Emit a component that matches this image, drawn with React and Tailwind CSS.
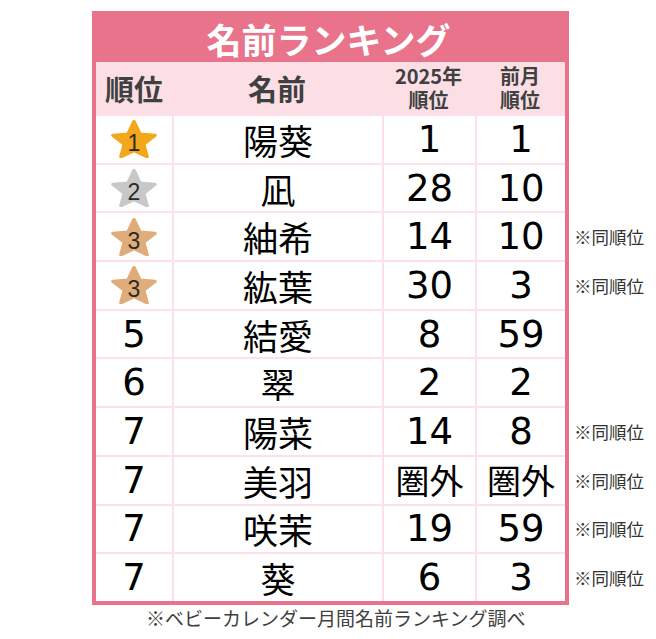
import React from "react";

const FONT = { fontFamily: '"DejaVu Sans", "Noto Sans CJK JP", sans-serif' };
const JP = { fontFamily: '"Noto Sans CJK JP", sans-serif' };

function Star({ color, n }) {
  return (
    <div className="relative w-[46px] h-[38px] flex items-center justify-center">
      <svg className="absolute inset-0" width="46" height="38" viewBox="0 0 100 92" preserveAspectRatio="none">
        <polygon
          points="50,4 62.93,34.2 95.65,37.17 70.92,58.8 78.21,88.83 50,74 21.79,88.83 29.08,58.8 4.35,37.17 37.07,34.2"
          fill={color}
          stroke={color}
          strokeWidth="8"
          strokeLinejoin="round"
        />
      </svg>
      <span className="relative text-[23px] leading-none text-[#2a2a2a] mt-[9px]" style={{ fontFamily: '"Liberation Sans", sans-serif' }}>
        {n}
      </span>
    </div>
  );
}

const rows = [
  { rank: <Star color="#f3a81c" n="1" />, name: "陽葵", y: "1", p: "1", note: false },
  { rank: <Star color="#c8c8c8" n="2" />, name: "凪", y: "28", p: "10", note: false },
  { rank: <Star color="#e0ad7a" n="3" />, name: "紬希", y: "14", p: "10", note: true },
  { rank: <Star color="#e0ad7a" n="3" />, name: "紘葉", y: "30", p: "3", note: true },
  { rank: "5", name: "結愛", y: "8", p: "59", note: false },
  { rank: "6", name: "翠", y: "2", p: "2", note: false },
  { rank: "7", name: "陽菜", y: "14", p: "8", note: true },
  { rank: "7", name: "美羽", y: "圏外", p: "圏外", note: true },
  { rank: "7", name: "咲茉", y: "19", p: "59", note: true },
  { rank: "7", name: "葵", y: "6", p: "3", note: true },
];

function Val({ v }) {
  if (v === "圏外") {
    return <span className="text-[34px] leading-none" style={JP}>{v}</span>;
  }
  return <span className="text-[37px] leading-none">{v}</span>;
}

export default function App() {
  return (
    <div className="w-[656px] h-[639px] bg-white text-black" style={FONT}>
      <div className="flex pt-[11px] pl-[92px]">
        <div className="w-[477px] border-4 border-[#e9738b] bg-white">
          <div className="h-[47px] bg-[#e9738b] flex items-center justify-center text-white font-bold text-[35px] leading-none pr-[4px]" style={JP}>
            名前ランキング
          </div>
          <div className="flex h-[52px] bg-[#fbdfe5] text-[#404040] font-bold" style={JP}>
            <div className="w-[76px] flex items-center justify-center text-[29px] leading-none">順位</div>
            <div className="w-[210px] flex items-center justify-center text-[29px] leading-none">名前</div>
            <div className="w-[93px] flex items-center justify-center text-center text-[20px] leading-[24px]">
              <p>2025年<br />順位</p>
            </div>
            <div className="w-[90px] flex items-center justify-center text-center text-[20px] leading-[24px]">
              <p>前月<br />順位</p>
            </div>
          </div>
          {rows.map((r, i) => (
            <div key={i} className="flex h-[48.7px] border-t-2 border-[#fde0e8]">
              <div className="w-[76px] flex items-center justify-center">
                {typeof r.rank === "string" ? (
                  <span className="text-[37px] leading-none">{r.rank}</span>
                ) : (
                  r.rank
                )}
              </div>
              <div className="w-[210px] border-l-2 border-[#fde0e8] flex items-center justify-center text-[35px] leading-none" style={JP}>
                {r.name}
              </div>
              <div className="w-[93px] border-l-2 border-[#fde0e8] flex items-center justify-center">
                <Val v={r.y} />
              </div>
              <div className="w-[90px] border-l-2 border-[#fde0e8] flex items-center justify-center">
                <Val v={r.p} />
              </div>
            </div>
          ))}
        </div>
        <div className="flex flex-col pt-[103px] pl-[5px]">
          {rows.map((r, i) => (
            <div key={i} className="h-[48.7px] flex items-center text-[17.5px] text-[#333] whitespace-nowrap pt-[3px]" style={JP}>
              {r.note ? "※同順位" : ""}
            </div>
          ))}
        </div>
      </div>
      <div className="mt-[3px] pl-[146px] text-[19px] leading-none text-[#404040] whitespace-nowrap" style={JP}>
        ※ベビーカレンダー月間名前ランキング調べ
      </div>
    </div>
  );
}
